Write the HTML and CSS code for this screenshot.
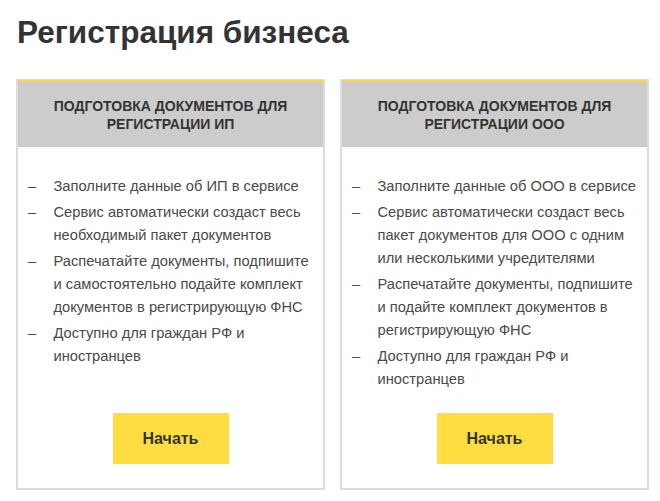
FILE: index.html
```html
<!DOCTYPE html>
<html lang="ru">
<head>
<meta charset="utf-8">
<title>Регистрация бизнеса</title>
<link rel="stylesheet" href="styles.css">
</head>
<body>
<main class="page">
  <h1 class="title">Регистрация бизнеса</h1>
  <div class="cards">
    <section class="card">
      <header class="card-head">ПОДГОТОВКА ДОКУМЕНТОВ ДЛЯ<br>РЕГИСТРАЦИИ ИП</header>
      <div class="card-body">
        <ul class="steps">
          <li>Заполните данные об ИП в сервисе</li>
          <li>Сервис автоматически создаст весь необходимый пакет документов</li>
          <li>Распечатайте документы, подпишите и самостоятельно подайте комплект документов в регистрирующую ФНС</li>
          <li>Доступно для граждан РФ и иностранцев</li>
        </ul>
        <a class="btn" href="#">Начать</a>
      </div>
    </section>
    <section class="card">
      <header class="card-head">ПОДГОТОВКА ДОКУМЕНТОВ ДЛЯ<br>РЕГИСТРАЦИИ ООО</header>
      <div class="card-body">
        <ul class="steps">
          <li>Заполните данные об ООО в сервисе</li>
          <li>Сервис автоматически создаст весь пакет документов для ООО с одним или несколькими учредителями</li>
          <li>Распечатайте документы, подпишите и подайте комплект документов в регистрирующую ФНС</li>
          <li>Доступно для граждан РФ и иностранцев</li>
        </ul>
        <a class="btn" href="#">Начать</a>
      </div>
    </section>
  </div>
</main>
</body>
</html>
```

FILE: styles.css
```css
* { box-sizing: border-box; }

html, body {
  margin: 0;
  padding: 0;
  background: #ffffff;
}

body {
  font-family: "Liberation Sans", Arial, sans-serif;
  color: #333333;
}

.page {
  padding: 14px 0 0 16px;
  width: 649px;
}

.title {
  margin: 0 0 29px 1px;
  font-size: 31.5px;
  line-height: 36px;
  font-weight: bold;
  color: #333333;
}

.cards {
  display: grid;
  grid-template-columns: 309px 309px;
  column-gap: 15px;
}

.card {
  display: flex;
  flex-direction: column;
  border: 2px solid #dcdcdc;
  border-top-width: 1px;
  background: #ffffff;
}

.card-head {
  background: #cccccc;
  border-top: 2px solid #f5d845;
  padding: 15px 10px 14px;
  text-align: center;
  font-size: 14px;
  line-height: 18px;
  font-weight: bold;
  color: #333333;
}

.card-body {
  flex: 1;
  display: flex;
  flex-direction: column;
  align-items: center;
  padding: 28px 10px 24px 10px;
}

.steps {
  list-style: none;
  margin: 0 -4px 22px 0;
  padding: 0;
  align-self: stretch;
  display: flex;
  flex-direction: column;
  gap: 3px;
  font-size: 14.7px;
  line-height: 23px;
  color: #4a4a4a;
}

.steps li {
  display: flex;
}

.steps li::before {
  content: "–";
  flex: 0 0 25.5px;
  color: #4a4a4a;
}

.btn {
  margin-top: auto;
  display: flex;
  align-items: center;
  justify-content: center;
  width: 116px;
  height: 51px;
  background: #ffdc40;
  color: #333333;
  font-size: 16px;
  font-weight: bold;
  text-decoration: none;
}
```
